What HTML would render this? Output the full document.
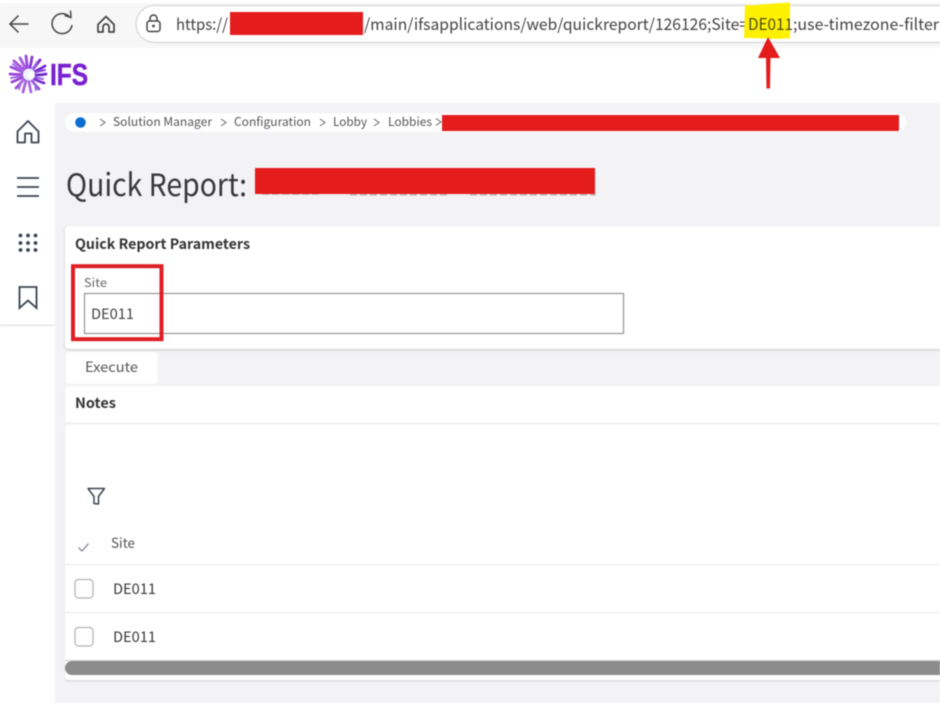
<!DOCTYPE html>
<html lang="en"><head><meta charset="utf-8"><title>Quick Report</title>
<style>
html,body{margin:0;padding:0;width:940px;height:703px;overflow:hidden;background:#fff}
svg{display:block;position:absolute;left:0;top:0;filter:blur(.4px)}
text{font-family:"Noto Sans CJK JP","Liberation Sans",sans-serif;fill:#444}
.b{font-weight:700;fill:#333}
</style></head><body>
<svg width="940" height="703" viewBox="0 0 940 703" xmlns="http://www.w3.org/2000/svg">
<defs>
<filter id="sh" x="-5%" y="-10%" width="110%" height="125%"><feDropShadow dx="0" dy="1" stdDeviation="1.2" flood-color="#000" flood-opacity=".18"/></filter>
<filter id="sl" x="-5%" y="-10%" width="110%" height="125%"><feDropShadow dx="0" dy=".5" stdDeviation=".8" flood-color="#000" flood-opacity=".08"/></filter>
</defs>
<rect width="940" height="703" fill="#fff"/>
<!-- browser chrome -->
<rect width="940" height="48" fill="#f7f7f7"/>
<rect y="0" width="940" height="3" fill="#fff"/>
<path d="M0 60Q0 48 12 48H940V103H0Z" fill="#fff"/>
<rect x="136" y="5.500" width="830" height="37" rx="18.500" fill="#fff" stroke="#d6d6d6" stroke-width="1.200"/>
<g fill="none" stroke="#444" stroke-width="1.500">
<path d="M28.500 24H10M18.500 15.500L10 24L18.500 32.500"/>
<path d="M70 17.500A10 10 0 1 0 72 25" />
<path d="M64.500 15.500L71 17.500L70.500 10.500" stroke-width="1.400"/>
<path stroke-width="1.700" d="M98 24.500L106 16.500L114 24.500V32H109V27A3 3 0 0 0 103 27V32H98Z" stroke-linejoin="round"/>
<rect x="147" y="21" width="13" height="10.500" rx="2.500"/>
<path d="M150 21V18.500A3.500 3.500 0 0 1 157 18.500V21"/>
</g>
<circle cx="153.500" cy="26" r="1.400" fill="#444"/>
<text x="176" y="30" font-size="16" textLength="52" lengthAdjust="spacingAndGlyphs">https://</text>
<rect x="230" y="12" width="133" height="23" fill="#e51c1c"/>
<text x="364" y="30" font-size="16" textLength="384" lengthAdjust="spacingAndGlyphs">/main/ifsapplications/web/quickreport/126126;Site=</text>
<path d="M745 5Q752 6 760 4.500Q775 3.500 790 2.500L790 38.500Q783 38 780 39Q760 38 744 38Z" fill="#fdf000"/>
<text x="748" y="30" font-size="16" textLength="45" lengthAdjust="spacingAndGlyphs" style="fill:#4d4d18">DE011</text>
<text x="793" y="30" font-size="16" textLength="146" lengthAdjust="spacingAndGlyphs">;use-timezone-filter</text>
<path d="M768 37L780 58H770.500L770 88.500H766.500L766 58H758Z" fill="#e31b1b"/>
<!-- logo -->
<g stroke-linecap="round" fill="none" stroke-width="2.800">
<path stroke="#8a35d8" d="M28 74Q31 65 32 57"/><path stroke="#7f2fd5" d="M28 74Q35 67 40 60"/><path stroke="#7228ce" d="M28 74Q37 71 45 66"/>
<path stroke="#6e2acb" d="M28 74Q38 76 46 74"/><path stroke="#7a2fd1" d="M28 74Q36 81 44 83"/><path stroke="#9150dc" d="M28 74Q33 83 39 89"/>
<path stroke="#a46be4" d="M28 74Q29 84 31 92"/><path stroke="#a862e0" d="M28 74Q25 84 23 92"/><path stroke="#a04fd8" d="M28 74Q22 82 16 88"/>
<path stroke="#9a42d4" d="M28 74Q20 79 12 82"/><path stroke="#9d45d8" d="M28 74Q19 75 10 74"/><path stroke="#a04bdc" d="M28 74Q20 71 11 67"/>
<path stroke="#a855e0" d="M28 74Q21 67 14 61"/><path stroke="#a35be2" d="M28 74Q24 65 20 58"/><path stroke="#9647de" d="M28 74Q27 65 26 56"/>
<path stroke="#a06ae4" d="M28 74Q33 69 37 62" stroke-width="2"/><path stroke="#a06ae4" d="M28 74Q21 80 19 89" stroke-width="2"/><path stroke="#9a60e0" d="M28 74Q36 78 43 79" stroke-width="2"/><path stroke="#a06ae4" d="M28 74Q20 70 13 64" stroke-width="2"/>
<path stroke="#a06ae4" d="M28 74Q35 80 36 90" stroke-width="2"/><path stroke="#a06ae4" d="M28 74Q19 77 11 78" stroke-width="2"/><path stroke="#8c44d8" d="M28 74Q36 72 45 70" stroke-width="2"/>
</g>
<circle cx="29" cy="74.500" r="6" fill="#eef2ff"/>
<circle cx="31" cy="75" r="3.500" fill="#fff"/>
<text x="50" y="85" font-size="31" font-weight="700" textLength="38" lengthAdjust="spacingAndGlyphs" style="fill:#7a22d2;font-family:'Liberation Sans',sans-serif;stroke:#7a22d2;stroke-width:.5">IFS</text>
<!-- main -->
<rect x="55" y="103" width="885" height="600" fill="#f3f2f5"/>
<rect x="0" y="324.500" width="55" height="1.500" fill="#e6e6e6"/>
<!-- side icons -->
<g fill="none" stroke="#3d4450" stroke-width="1.800">
<path d="M17.500 131.500L28 121L38.500 131.500V142.500H31.500V133.500H25V142.500H17.500Z" stroke-linejoin="round"/>
<path d="M17 178H39M17 187H39M17 196H39"/>
<path d="M19.500 287H36.500V308L28 300.500L19.500 308Z" stroke-linejoin="miter"/>
</g>
<g fill="#3d4450">
<circle cx="20.500" cy="235.500" r="1.900"/><circle cx="28" cy="235.500" r="1.900"/><circle cx="35.500" cy="235.500" r="1.900"/>
<circle cx="20.500" cy="243" r="1.900"/><circle cx="28" cy="243" r="1.900"/><circle cx="35.500" cy="243" r="1.900"/>
<circle cx="20.500" cy="250" r="1.900"/><circle cx="28" cy="250" r="1.900"/><circle cx="35.500" cy="250" r="1.900"/>
</g>
<!-- breadcrumb -->
<rect x="65" y="113" width="841" height="19" rx="9.500" fill="#fff"/>
<circle cx="80.500" cy="122.500" r="5.300" fill="#0b6fd1"/>
<g fill="none" stroke="#666" stroke-width="1"><path d="M100 119L105 122.500L100 126M221 119L226 122.500L221 126M320 119L325 122.500L320 126M374 119L379 122.500L374 126M436 118.500L441 122L436 125.500"/></g>
<text x="113" y="126" font-size="12" textLength="99" lengthAdjust="spacingAndGlyphs" style="fill:#555">Solution Manager</text>
<text x="234" y="126" font-size="12" textLength="77" lengthAdjust="spacingAndGlyphs" style="fill:#555">Configuration</text>
<text x="333" y="126" font-size="12" textLength="34" lengthAdjust="spacingAndGlyphs" style="fill:#555">Lobby</text>
<text x="388" y="126" font-size="12" textLength="44" lengthAdjust="spacingAndGlyphs" style="fill:#555">Lobbies</text>
<rect x="442" y="115" width="457" height="16" fill="#e51c1c"/>
<!-- title -->
<text x="66" y="196" font-size="31" textLength="181" lengthAdjust="spacingAndGlyphs" style="fill:#383838">Quick Report:</text>
<path d="M262 194H320M350 194.800H450M470 194.800H596" stroke="#6d5a5a" stroke-width="1.200" stroke-dasharray="7 3" opacity=".5"/>
<rect x="255" y="168" width="340" height="26" fill="#e51c1c"/>
<!-- params card -->
<rect x="65" y="226" width="900" height="123" rx="4" fill="#fff" filter="url(#sh)"/>
<text class="b" x="75" y="249" font-size="14" textLength="175" lengthAdjust="spacingAndGlyphs">Quick Report Parameters</text>
<text x="84" y="287" font-size="12" textLength="23" lengthAdjust="spacingAndGlyphs" style="fill:#666">Site</text>
<rect x="84.500" y="293.500" width="539" height="40" fill="#fff" stroke="#9b9b9b" stroke-width="1.300"/>
<text x="91" y="319" font-size="14.500" textLength="43" lengthAdjust="spacingAndGlyphs">DE011</text>
<rect x="73" y="266.200" width="88.500" height="73" fill="none" stroke="#e01f24" stroke-width="4"/>
<!-- execute -->
<rect x="66" y="352" width="91.500" height="32" rx="3" fill="#fff"/>
<text x="85" y="372" font-size="14" textLength="53" lengthAdjust="spacingAndGlyphs" style="fill:#555">Execute</text>
<!-- notes -->
<rect x="65" y="386" width="900" height="37" rx="3" fill="#fff" filter="url(#sl)"/>
<text class="b" x="75" y="408" font-size="14" textLength="41" lengthAdjust="spacingAndGlyphs">Notes</text>
<!-- table -->
<rect x="65" y="424.500" width="900" height="256" rx="4" fill="#fff" filter="url(#sl)"/>
<rect x="65" y="680" width="875" height="1.500" fill="#dcdcdc"/>
<path d="M88 488.500H104.500L98.500 496.500V504L94 503.500V496.500Z" fill="none" stroke="#3d4450" stroke-width="1.500" stroke-linejoin="round"/>
<path d="M78.500 547.500L82 551L88.500 543.500" fill="none" stroke="#6f7580" stroke-width="1.100"/>
<text x="111" y="548" font-size="14" textLength="24" lengthAdjust="spacingAndGlyphs" style="fill:#555">Site</text>
<rect x="65" y="564" width="875" height="1.200" fill="#ececec"/>
<rect x="65" y="612" width="875" height="1.200" fill="#ececec"/>
<rect x="75" y="579.500" width="18" height="18.500" rx="3.500" fill="#fff" stroke="#b5b5b5" stroke-width="1.300"/>
<rect x="75" y="627.500" width="18" height="18.500" rx="3.500" fill="#fff" stroke="#b5b5b5" stroke-width="1.300"/>
<text x="113" y="594" font-size="14.500" textLength="43" lengthAdjust="spacingAndGlyphs" style="fill:#3a3a3a">DE011</text>
<text x="113" y="642" font-size="14.500" textLength="43" lengthAdjust="spacingAndGlyphs" style="fill:#3a3a3a">DE011</text>
<rect x="65" y="660" width="900" height="1" fill="#cfcfcf"/>
<rect x="65" y="661" width="900" height="14" rx="7" fill="#8c8c8c"/>
</svg>
</body></html>
